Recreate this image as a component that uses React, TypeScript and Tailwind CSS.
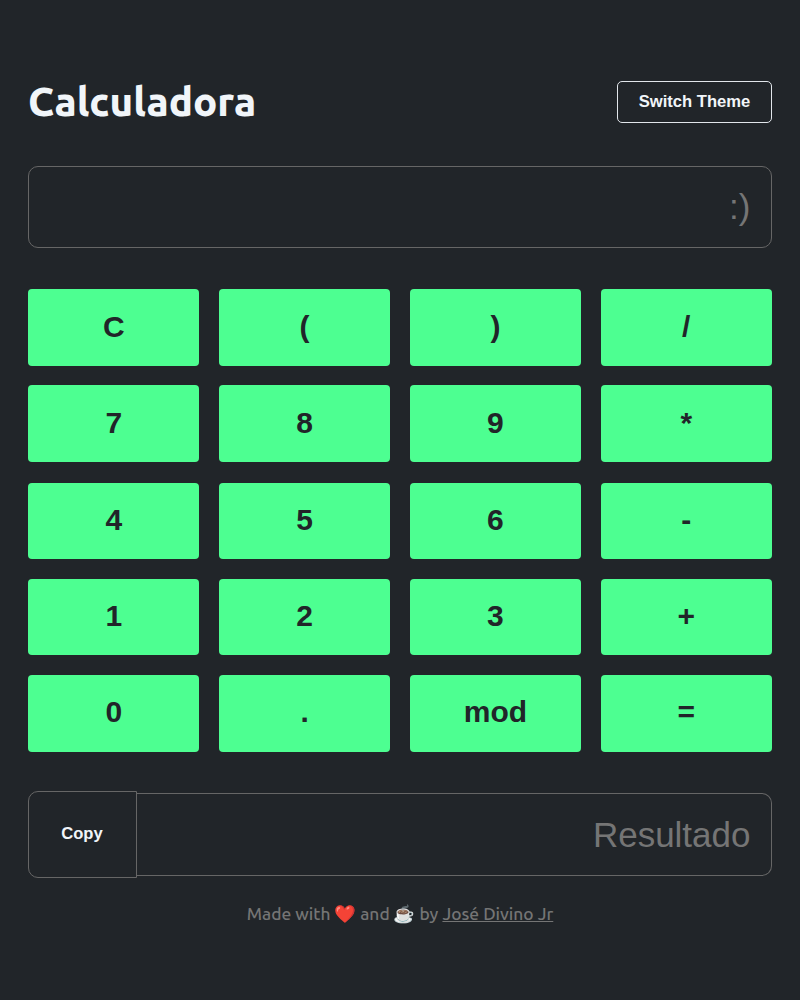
const rows = [
  { keys: ["C", "(", ")", "/"], size: "h-[76.5px]", label: "pb-[1.5px]" },
  { keys: ["7", "8", "9", "*"], size: "h-[77px] mt-[19.5px]", label: "pb-[1.5px]" },
  { keys: ["4", "5", "6", "-"], size: "h-[75.5px] mt-[21px]", label: "pb-[3px]" },
  { keys: ["1", "2", "3", "+"], size: "h-[75.5px] mt-[20.5px]", label: "pb-[3px]" },
  { keys: ["0", ".", "mod", "="], size: "h-[77px] mt-[20.5px]", label: "pb-[4px]" },
];

export default function App() {
  return (
    <main className="h-[1000px] w-full overflow-hidden bg-[#212529] px-[28px] pt-[81px] font-['Liberation_Sans',Arial,sans-serif]">
      <header className="flex h-[42px] items-center justify-between">
        <h1 className="whitespace-nowrap font-['Ubuntu','Noto_Sans',sans-serif] text-[40.2px] font-extrabold leading-[42px] text-[#f1f5f9]">
          Calculadora
        </h1>
        <button className="h-[42px] w-[155px] whitespace-nowrap rounded-[5px] border border-[#e2e6eb] text-[16.6px] font-bold text-[#f1f5f9]">
          Switch Theme
        </button>
      </header>
      <input
        aria-label="Expression"
        placeholder=":)"
        className="mt-[43px] block h-[82px] w-[744px] rounded-[10px] border border-[#666] bg-transparent pl-[21px] pr-[20.5px] text-right text-[35px] text-[#f1f5f9] placeholder:text-[#757575]"
      />
      <section className="mt-[41px]">
        {rows.map((row) => (
          <div key={row.keys[0]} className={`grid grid-cols-4 gap-[19.4px] ${row.size}`}>
            {row.keys.map((key) => (
              <button key={key} className={`rounded-[4px] bg-[#4dff91] text-[30px] font-bold text-[#212529] ${row.label}`}>
                {key}
              </button>
            ))}
          </div>
        ))}
      </section>
      <div className="mt-[39px] flex h-[87px] items-center">
        <button className="h-[87px] w-[109px] rounded-l-[10px] border border-[#666] pr-[1px] text-[16.6px] font-bold text-[#f1f5f9]">
          Copy
        </button>
        <input
          aria-label="Result"
          placeholder="Resultado"
          readOnly
          className="h-[83px] w-[635px] rounded-r-[10px] border border-l-0 border-[#666] bg-transparent pl-[21px] pr-[20.5px] text-right text-[35px] text-[#f1f5f9] placeholder:text-[#757575]"
        />
      </div>
      <footer className="mt-[23px] whitespace-nowrap text-center font-['Ubuntu','Noto_Sans','Noto_Color_Emoji',sans-serif] text-[17.4px] font-medium leading-[25px] text-[#757575]">
        Made with ❤️ and ☕ by <a className="underline">José Divino Jr</a>
      </footer>
    </main>
  );
}
